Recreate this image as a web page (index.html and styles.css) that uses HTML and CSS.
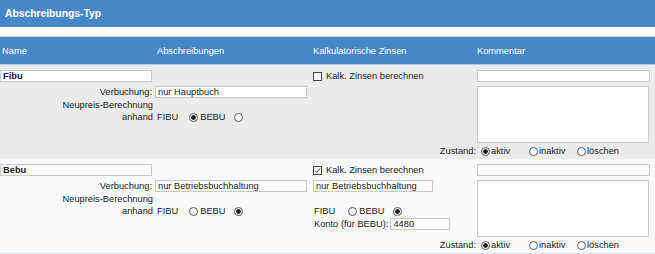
FILE: index.html
```html
<!DOCTYPE html>
<html lang="de">
<head>
<meta charset="UTF-8">
<title>Abschreibungs-Typ</title>
<link rel="stylesheet" href="styles.css">
</head>
<body>
<!-- Titel -->
<div class="title">Abschreibungs-Typ</div>
<div class="strip"></div>

<!-- Spaltenkopf -->
<div class="grid head">
<span class="h1">Name</span>
<span class="h2">Abschreibungen</span>
<span>Kalkulatorische Zinsen</span>
<span>Kommentar</span>
</div>

<!-- Fibu -->
<div class="grid row">
<input class="field name" type="text" value="Fibu">
<label class="check">
<svg class="box" viewBox="0 0 9 9"><rect x="0.5" y="0.5" width="8" height="8" fill="#fff" stroke="#444"/></svg>
Kalk. Zinsen berechnen
</label>
<input class="field comment" type="text" value="">
<span class="lbl verb-lbl">Verbuchung:</span>
<input class="field verb" type="text" value="nur Hauptbuch">
<textarea class="memo"></textarea>
<span class="lbl neu-lbl">Neupreis-Berechnung<br>anhand</span>
<span class="basis basis-abschr">FIBU <input type="radio" class="rb rb-first" name="b1" checked><span class="rb-txt">BEBU</span><input type="radio" class="rb rb-second" name="b1"></span>
<span class="lbl state-lbl">Zustand:</span>
<span class="states">
<span class="opt"><input type="radio" class="rb" name="z1" checked>aktiv</span>
<span class="opt"><input type="radio" class="rb" name="z1">inaktiv</span>
<span class="opt"><input type="radio" class="rb" name="z1">löschen</span>
</span>
</div>

<!-- Bebu -->
<div class="grid row alt">
<input class="field name" type="text" value="Bebu">
<label class="check">
<svg class="box" viewBox="0 0 9 9"><rect x="0.5" y="0.5" width="8" height="8" fill="#fff" stroke="#444"/><polyline points="2,4.5 3.8,6.5 7,2.5" fill="none" stroke="#333" stroke-width="1"/></svg>
Kalk. Zinsen berechnen
</label>
<input class="field comment" type="text" value="">
<span class="lbl verb-lbl">Verbuchung:</span>
<input class="field verb" type="text" value="nur Betriebsbuchhaltung">
<input class="field verb-kalk" type="text" value="nur Betriebsbuchhaltung">
<textarea class="memo"></textarea>
<span class="lbl neu-lbl">Neupreis-Berechnung<br>anhand</span>
<span class="basis basis-abschr">FIBU <input type="radio" class="rb rb-first" name="b2"><span class="rb-txt">BEBU</span><input type="radio" class="rb rb-second" name="b2" checked></span>
<span class="basis basis-kalk">FIBU <input type="radio" class="rb rb-first" name="b3"><span class="rb-txt">BEBU</span><input type="radio" class="rb rb-second" name="b3" checked></span>
<span class="konto">Konto (für BEBU): <input class="field konto-in" type="text" value="4480"></span>
<span class="lbl state-lbl">Zustand:</span>
<span class="states">
<span class="opt"><input type="radio" class="rb" name="z2" checked>aktiv</span>
<span class="opt"><input type="radio" class="rb" name="z2">inaktiv</span>
<span class="opt"><input type="radio" class="rb" name="z2">löschen</span>
</span>
</div>
</body>
</html>
```

FILE: styles.css
```css
/* Seite */
body {
margin: 0;
font-family: "Liberation Sans", Arial, sans-serif;
font-size: 9.3px;
color: #222;
background-color: #fff;
}

/* Titelleiste */
.title {
background-color: #4787c7;
color: #fff;
font-weight: bold;
font-size: 10.3px;
height: 27px;
line-height: 27px;
padding-left: 5px;
}

.strip {
height: 9px;
background-color: #fbfaf8;
border-bottom: 1px solid #d2d2d2;
}

/* Raster fuer Kopf und Zeilen */
.grid {
display: grid;
grid-template-columns: 155px 158px 164px 173px;
}

.head {
background-color: #4787c7;
color: #fff;
height: 27px;
align-items: center;
border-bottom: 1px solid #b4cde6;
}

.head .h1 {
padding-left: 2px;
}

.head .h2 {
padding-left: 2px;
}

/* Datenzeilen */
.row {
grid-template-rows: 16px 13px 24px 15px 7px 14px;
padding-top: 5px;
background-color: #ebebeb;
line-height: 12px;
}

.row.alt {
background-color: #f8f9fb;
border-bottom: 1px solid #d9e5f2;
}

/* Eingabefelder */
.field {
box-sizing: border-box;
height: 12px;
margin: 0;
padding: 0 2px;
border: 1px solid #c9c9c9;
background-color: #fff;
font: inherit;
color: #222;
outline: none;
}

.name {
grid-column: 1;
grid-row: 1;
width: 152px;
font-weight: bold;
}

.check {
grid-column: 3;
grid-row: 1;
display: flex;
align-items: center;
gap: 4px;
height: 12px;
}

.box {
width: 9px;
height: 9px;
}

.comment {
grid-column: 4;
grid-row: 1;
width: 173px;
}

.lbl {
text-align: right;
padding-right: 3px;
}

.verb-lbl {
grid-column: 1;
grid-row: 2;
}

.verb {
grid-column: 2;
grid-row: 2;
width: 152px;
}

.verb-kalk {
grid-column: 3;
grid-row: 2;
width: 120px;
}

.memo {
grid-column: 4;
grid-row: 2 / 6;
box-sizing: border-box;
width: 172px;
height: 57px;
margin: 0;
border: 1px solid #c9c9c9;
background-color: #fff;
resize: none;
}

.neu-lbl {
grid-column: 1;
grid-row: 3;
padding-right: 2px;
}

.basis {
grid-row: 3;
align-self: end;
display: flex;
align-items: center;
height: 12px;
}

.basis-abschr {
grid-column: 2;
padding-left: 2px;
}

.basis-kalk {
grid-column: 3;
padding-left: 1px;
}

.basis .rb-first {
margin-left: 11px;
}

.basis-kalk .rb-first {
margin-left: 13px;
}

.rb-txt {
margin-left: 1px;
}

.basis .rb-second {
margin-left: 8px;
}

.konto {
grid-column: 3;
grid-row: 4;
padding-left: 1px;
display: flex;
align-items: center;
gap: 2px;
height: 14px;
}

.konto-in {
width: 60px;
}

/* Radio-Knoepfe */
.rb {
appearance: none;
box-sizing: border-box;
width: 9px;
height: 9px;
margin: 0 1px 0 0;
border: 1px solid #555;
border-radius: 50%;
background: #fff;
}

.rb:checked {
background: radial-gradient(circle, #222 0 2px, #fff 2.6px);
}

.state-lbl {
grid-column: 3;
grid-row: 6;
padding-right: 1px;
}

.states {
grid-column: 4;
grid-row: 6;
display: flex;
padding-left: 4px;
}

.opt {
display: flex;
align-items: center;
width: 48px;
height: 12px;
}
```
